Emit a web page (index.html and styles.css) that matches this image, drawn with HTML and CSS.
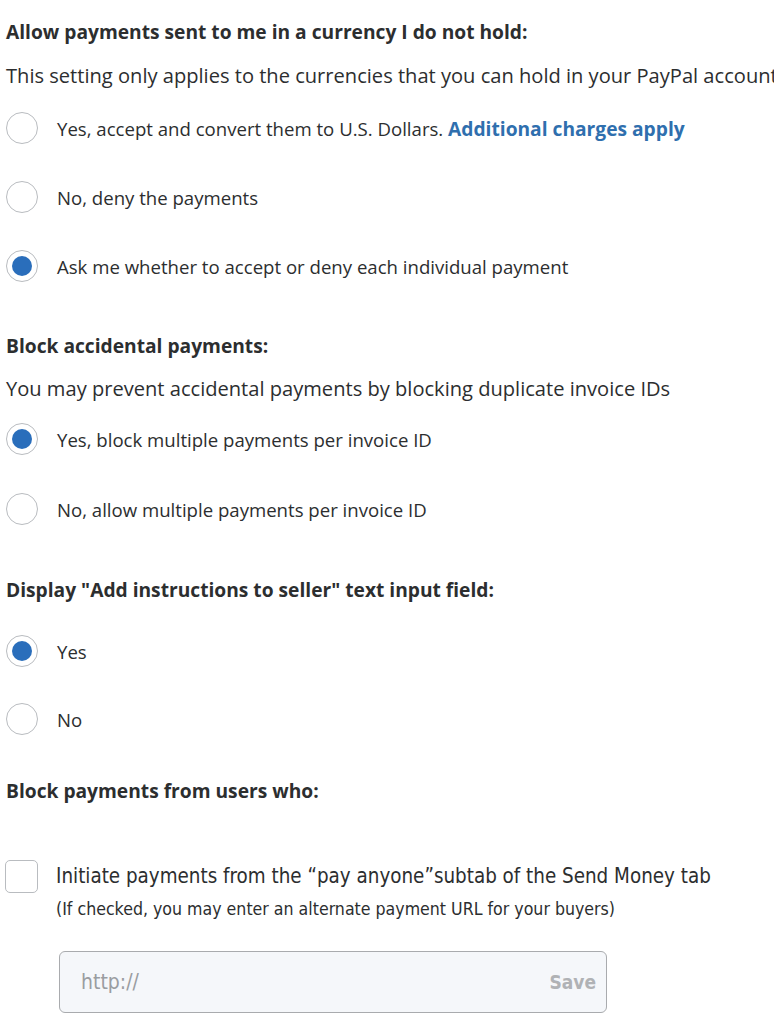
FILE: index.html
```html
<!DOCTYPE html>
<html>
<head>
<meta charset="utf-8">
<link rel="stylesheet" href="styles.css">
</head>
<body>
<div class="page">
  <section class="group g1">
    <h2 class="heading">Allow payments sent to me in a currency I do not hold:</h2>
    <p class="desc">This setting only applies to the currencies that you can hold in your PayPal account.</p>
    <div class="options">
      <label class="option"><span class="radio"></span><span class="text">Yes, accept and convert them to U.S. Dollars. <a class="link">Additional charges apply</a></span></label>
      <label class="option"><span class="radio"></span><span class="text">No, deny the payments</span></label>
      <label class="option"><span class="radio checked"></span><span class="text">Ask me whether to accept or deny each individual payment</span></label>
    </div>
  </section>
  <section class="group g2">
    <h2 class="heading">Block accidental payments:</h2>
    <p class="desc">You may prevent accidental payments by blocking duplicate invoice IDs</p>
    <div class="options">
      <label class="option"><span class="radio checked"></span><span class="text">Yes, block multiple payments per invoice ID</span></label>
      <label class="option"><span class="radio"></span><span class="text">No, allow multiple payments per invoice ID</span></label>
    </div>
  </section>
  <section class="group g3">
    <h2 class="heading">Display "Add instructions to seller" text input field:</h2>
    <div class="options">
      <label class="option"><span class="radio checked"></span><span class="text">Yes</span></label>
      <label class="option"><span class="radio"></span><span class="text">No</span></label>
    </div>
  </section>
  <section class="group g4">
    <h2 class="heading">Block payments from users who:</h2>
    <div class="check-row">
      <span class="checkbox"></span>
      <div class="check-body">
        <div class="check-text">Initiate payments from the “pay anyone”subtab of the Send Money tab</div>
        <div class="note">(If checked, you may enter an alternate payment URL for your buyers)</div>
        <div class="url-field">
          <span class="placeholder">http://</span>
          <span class="save">Save</span>
        </div>
      </div>
    </div>
  </section>
</div>
</body>
</html>
```
FILE: styles.css
```css
html, body {
  margin: 0;
  padding: 0;
  background: #ffffff;
}
body {
  font-family: "Open Sans", "Noto Sans", sans-serif;
  color: #2c2e2f;
  overflow: hidden;
  width: 774px;
  height: 1024px;
}
.page {
  padding: 20px 0 0 6px;
}
.group {
  display: flex;
  flex-direction: column;
}
.heading {
  margin: 0;
  font-size: 19.2px;
  font-weight: 700;
  line-height: 24px;
  white-space: nowrap;
}
.desc {
  margin: 20px 0 0 0;
  font-size: 20.1px;
  line-height: 24px;
  white-space: nowrap;
}
.options {
  display: flex;
  flex-direction: column;
  gap: 37px;
  margin-top: 24px;
}
.option {
  display: flex;
  align-items: center;
  height: 32px;
  gap: 19px;
  font-size: 18.6px;
}
.text {
  white-space: nowrap;
}
.link {
  color: #2f6fae;
  font-weight: 700;
  font-size: 19.2px;
}
.radio {
  width: 30px;
  height: 30px;
  border: 1px solid #b9bcc0;
  border-radius: 50%;
  box-sizing: content-box;
  background: #fff;
  position: relative;
  flex: none;
}
.radio.checked::after {
  content: "";
  position: absolute;
  left: 5px;
  top: 5px;
  width: 20px;
  height: 20px;
  border-radius: 50%;
  background: #2a6ebb;
}
.g2 { margin-top: 52px; }
.g2 .desc { margin-top: 19px; }
.g2 .options { margin-top: 22px; gap: 38px; }
.g3 { margin-top: 53px; }
.g3 .options { margin-top: 33px; gap: 36px; }
.g4 { margin-top: 44px; }
.check-row {
  display: flex;
  margin-top: 57px;
  gap: 18px;
}
.checkbox {
  width: 31px;
  height: 31px;
  border: 1px solid #b9bcc0;
  border-radius: 5px;
  flex: none;
  margin-left: -1px;
}
.check-body {
  display: flex;
  flex-direction: column;
}
.check-text {
  font-family: "DejaVu Sans Condensed", "DejaVu Sans", sans-serif;
  font-stretch: condensed;
  font-size: 20.4px;
  line-height: 32px;
  white-space: nowrap;
}
.note {
  font-family: "DejaVu Sans Condensed", "DejaVu Sans", sans-serif;
  font-stretch: condensed;
  font-size: 17.6px;
  line-height: 22px;
  margin-top: 6px;
  white-space: nowrap;
}
.url-field {
  margin-top: 31px;
  margin-left: 3px;
  width: 548px;
  height: 62px;
  box-sizing: border-box;
  border: 1px solid #a9abae;
  border-radius: 6px;
  background: #f5f7fa;
  display: flex;
  align-items: center;
  justify-content: space-between;
  padding: 0 10px 0 21px;
  font-family: "DejaVu Sans Condensed", "DejaVu Sans", sans-serif;
  font-stretch: condensed;
  font-size: 20px;
  flex: none;
}
.placeholder {
  color: #9a9da1;
  font-size: 21px;
}
.save {
  color: #b0b2b5;
  font-weight: 700;
  font-size: 19px;
}
```
